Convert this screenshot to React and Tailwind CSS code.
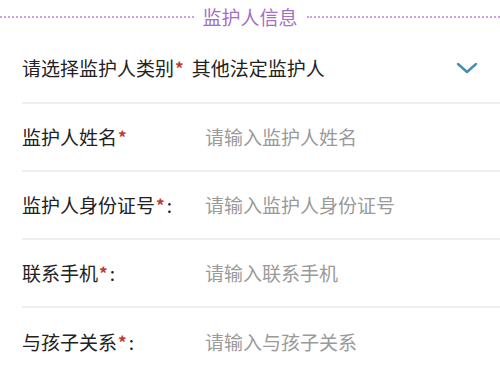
export default function App() {
  const font = { fontFamily: '"Noto Sans CJK SC", "Noto Sans", sans-serif' };
  const rows = [
    { label: "监护人姓名", colon: false, ph: "请输入监护人姓名" },
    { label: "监护人身份证号", colon: true, ph: "请输入监护人身份证号" },
    { label: "联系手机", colon: true, ph: "请输入联系手机" },
    { label: "与孩子关系", colon: true, ph: "请输入与孩子关系" },
  ];
  return (
    <div className="w-[500px] h-[372px] bg-white overflow-hidden" style={font}>
      <div className="flex items-center h-[32px] pt-[1px]">
        <div className="flex-1 border-t-2 border-dotted border-[#c9a6d9]"></div>
        <div className="px-[9px] text-[19px] leading-none text-[#a56fc4]">监护人信息</div>
        <div className="flex-1 border-t-2 border-dotted border-[#c9a6d9]"></div>
      </div>
      <div className="pl-[22px]">
        <div className="flex items-center h-[72px] border-b-2 border-[#eeeeee] text-[19px] text-[#222] pt-[2px]">
          <span>请选择监护人类别</span>
          <span className="text-[#c0392b] text-[17px] font-bold ml-[1px]">*</span>
          <span className="ml-[8px]">其他法定监护人</span>
          <div className="flex-1"></div>
          <svg width="22" height="14" viewBox="0 0 22 14" className="mr-[22px]">
            <path d="M2 3 L11 11 L20 3" fill="none" stroke="#4a8cab" strokeWidth="2.4" strokeLinecap="round" strokeLinejoin="round" />
          </svg>
        </div>
        {rows.map((r, i) => (
          <div
            key={i}
            className={`flex items-center h-[68px] text-[19px] ${i < rows.length - 1 ? "border-b-2 border-[#eeeeee]" : ""}`}
          >
            <div className="w-[183px] flex items-center text-[#222]">
              <span>{r.label}</span>
              <span className="text-[#c0392b] text-[17px] font-bold ml-[1px]">*</span>
              {r.colon && <span className="ml-[2px]">:</span>}
            </div>
            <span className="text-[#9a9a9a]">{r.ph}</span>
          </div>
        ))}
      </div>
    </div>
  );
}
